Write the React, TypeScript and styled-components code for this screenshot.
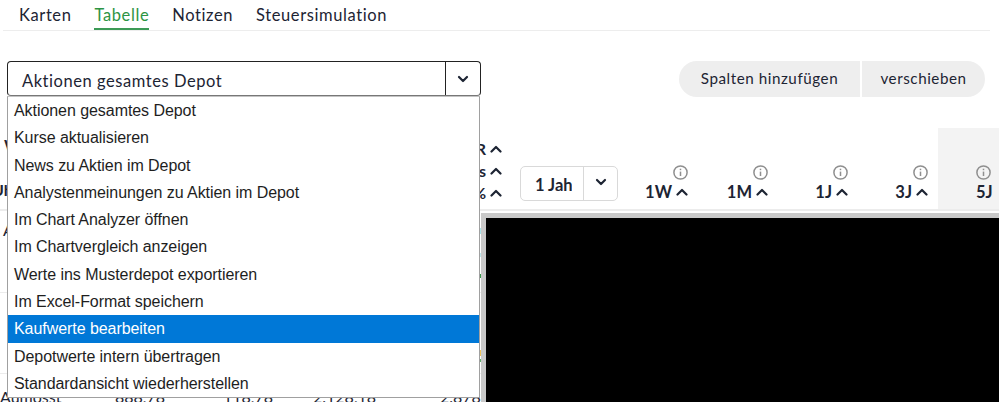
import React from 'react';
import styled, { createGlobalStyle } from 'styled-components';

const GlobalStyle = createGlobalStyle`
  html, body { margin: 0; padding: 0; background: #fff; }
  body { width: 999px; height: 402px; overflow: hidden; font-family: Lato, "Open Sans", sans-serif; color: #1d2433; }
`;

const Page = styled.div`
  position: relative;
  width: 999px;
  height: 402px;
  overflow: hidden;
`;

const Tabs = styled.nav`
  display: flex;
  gap: 23px;
  height: 30px;
  margin: 0 9px 0 3px;
  padding-left: 16px;
  border-bottom: 1px solid #ededed;
  box-sizing: content-box;
`;

const Tab = styled.a<{ $active?: boolean }>`
  height: 28px;
  line-height: 30px;
  font-size: 16.5px;
  letter-spacing: 0.6px;
  color: ${(p) => (p.$active ? '#2c9443' : '#1d2433')};
  border-bottom: ${(p) => (p.$active ? '2px solid #3c9a56' : 'none')};
`;

const Toolbar = styled.div`
  display: flex;
  justify-content: space-between;
  align-items: flex-start;
  height: 67px;
  margin-top: 30px;
  padding: 0 14px 0 7px;
`;

const SelectBox = styled.div`
  display: flex;
  width: 474px;
  height: 35px;
  box-sizing: border-box;
  border: 1px solid #222;
  border-bottom-color: #777;
  border-radius: 4px;
`;

const SelectValue = styled.div`
  flex: 1;
  padding-left: 14px;
  line-height: 38px;
  font-size: 16.5px;
  letter-spacing: 0.55px;
  border-right: 1px solid #222;
`;

const SelectArrow = styled.div`
  display: flex;
  align-items: center;
  justify-content: center;
  width: 34px;
`;

const ButtonGroup = styled.div`
  display: flex;
  gap: 2px;
`;

const PillButton = styled.button<{ $side: 'left' | 'right' }>`
  height: 36px;
  padding: 0 0 2px;
  width: ${(p) => (p.$side === 'left' ? '181px' : '123px')};
  border: 0;
  border-radius: ${(p) => (p.$side === 'left' ? '18px 0 0 18px' : '0 18px 18px 0')};
  background: #eeeeee;
  color: #1d2433;
  font-family: inherit;
  font-size: 15.2px;
  letter-spacing: 0.55px;
`;

const HeaderRow = styled.div`
  display: grid;
  grid-template-columns: 150px 370px 98px 70px repeat(4, 80px);
  height: 81px;
  border-bottom: 2px solid #ececec;
`;

const TitleCell = styled.div`
  display: flex;
  flex-direction: column;
  gap: 27px;
  padding-top: 8px;
  font-size: 16px;
  font-weight: 700;
  line-height: 18px;
`;

const TitleLine = styled.span<{ $offset: number }>`
  margin-left: ${(p) => p.$offset}px;
`;

const StackCell = styled.div`
  display: flex;
  flex-direction: column;
  align-items: flex-end;
  justify-content: flex-end;
  gap: 5px;
  padding: 0 18px 8px 0;
  font-size: 16px;
  font-weight: 700;
  line-height: 17px;
`;

const PeriodCell = styled.div`
  display: flex;
  align-self: end;
  height: 35px;
  margin-bottom: 8px;
  box-sizing: border-box;
  border: 1px solid #d9d9d9;
  border-radius: 5px;
`;

const PeriodValue = styled.div`
  width: 63px;
  padding: 0 11px 0 14px;
  box-sizing: border-box;
  border-right: 1px solid #d9d9d9;
`;

const PeriodText = styled.div`
  overflow: hidden;
  white-space: nowrap;
  font-size: 16.5px;
  font-weight: 700;
  line-height: 37px;
`;

const PeriodArrow = styled.div`
  flex: 1;
  display: flex;
  align-items: center;
  justify-content: center;
  padding-bottom: 4px;
`;

const ReturnCell = styled.div<{ $shaded?: boolean }>`
  display: flex;
  flex-direction: column;
  align-items: flex-end;
  justify-content: flex-end;
  gap: 3px;
  padding-bottom: 8px;
  background: ${(p) => (p.$shaded ? '#f3f3f3' : 'transparent')};
  font-size: 16.5px;
  font-weight: 700;
  line-height: 18px;
  white-space: nowrap;
`;

const ShadedCell = styled(ReturnCell)`
  grid-column: 8;
  margin-right: -80px;
  padding-right: 10px;
  margin-left: 10px;
  align-items: flex-start;
  padding-left: 38px;
`;

const SortLabel = styled.span`
  display: inline-flex;
  align-items: center;
  gap: 4px;
`;

const TableRow = styled.div<{ $first?: boolean; $last?: boolean }>`
  display: grid;
  grid-template-columns: 115px 108px 90px 127px 1fr;
  height: 81.5px;
  box-sizing: border-box;
  padding-top: ${(p) => (p.$last ? '14px' : '10px')};
  padding-left: ${(p) => (p.$first ? '3px' : '0')};
  border-bottom: 1px solid #ececec;
  font-size: 16px;
  line-height: 18px;
`;

const Menu = styled.ul`
  position: absolute;
  left: 7px;
  top: 96px;
  width: 473px;
  height: 302px;
  box-sizing: border-box;
  margin: 0;
  padding: 0;
  list-style: none;
  background: #fff;
  border: 1px solid #a0a0a0;
  border-top-color: #c4c4c4;
  font-family: "Liberation Sans", Arial, sans-serif;
  font-size: 16px;
  letter-spacing: -0.06px;
  color: #1e1e1e;
`;

const MenuItem = styled.li<{ $selected?: boolean }>`
  height: 27.3px;
  line-height: 27.6px;
  padding-left: 6px;
  background: ${(p) => (p.$selected ? '#0078d7' : 'transparent')};
  color: ${(p) => (p.$selected ? '#fff' : 'inherit')};
`;

const BlackPanel = styled.div`
  position: absolute;
  left: 481px;
  top: 213px;
  right: 0;
  bottom: 0;
  background: #000;
  border-top: 5px solid #c9c9c9;
  border-left: 5px solid #c9c9c9;
`;

const Ticks = styled.svg`
  position: absolute;
  left: 480px;
  top: 218px;
`;

const Chevron = ({ up = false, size = 12, sw = 2.2 }: { up?: boolean; size?: number; sw?: number }) => (
  <svg width={size} height={size} viewBox="0 0 12 12" fill="none" stroke="#1d2433" strokeWidth={sw} strokeLinecap="round" strokeLinejoin="round">
    <path d={up ? 'M1.5 8.5L6 4l4.5 4.5' : 'M2 4l4 4 4-4'} />
  </svg>
);

const InfoIcon = () => (
  <svg width="15" height="15" viewBox="0 0 15 15" fill="none" stroke="#8f8f8f" strokeWidth="1.5">
    <circle cx="7.5" cy="7.5" r="6.6" />
    <path d="M7.5 6.6v4.4" />
    <path d="M7.5 3.7v1.5" />
  </svg>
);

const menuItems = [
  'Aktionen gesamtes Depot',
  'Kurse aktualisieren',
  'News zu Aktien im Depot',
  'Analystenmeinungen zu Aktien im Depot',
  'Im Chart Analyzer öffnen',
  'Im Chartvergleich anzeigen',
  'Werte ins Musterdepot exportieren',
  'Im Excel-Format speichern',
  'Kaufwerte bearbeiten',
  'Depotwerte intern übertragen',
  'Standardansicht wiederherstellen',
];

const periods = ['1W', '1M', '1J', '3J'];

const App = () => {
  return (
    <Page>
      <GlobalStyle />
      <Tabs>
        <Tab>Karten</Tab>
        <Tab $active>Tabelle</Tab>
        <Tab>Notizen</Tab>
        <Tab>Steuersimulation</Tab>
      </Tabs>

      <Toolbar>
        <SelectBox>
          <SelectValue>Aktionen gesamtes Depot</SelectValue>
          <SelectArrow>
            <Chevron />
          </SelectArrow>
        </SelectBox>
        <ButtonGroup>
          <PillButton $side="left">Spalten hinzufügen</PillButton>
          <PillButton $side="right">verschieben</PillButton>
        </ButtonGroup>
      </Toolbar>

      <HeaderRow>
        <TitleCell>
          <TitleLine $offset={4}>Wert</TitleLine>
          <TitleLine $offset={-8}>Uhr</TitleLine>
        </TitleCell>
        <StackCell>
          <SortLabel>EUR <Chevron up size={12} /></SortLabel>
          <SortLabel>Titels <Chevron up size={12} /></SortLabel>
          <SortLabel>in % <Chevron up size={12} /></SortLabel>
        </StackCell>
        <PeriodCell>
          <PeriodValue>
            <PeriodText>1 Jahr</PeriodText>
          </PeriodValue>
          <PeriodArrow>
            <Chevron />
          </PeriodArrow>
        </PeriodCell>
        {periods.map((period) => (
          <ReturnCell key={period}>
            <InfoIcon />
            <SortLabel>
              {period} <Chevron up size={12} />
            </SortLabel>
          </ReturnCell>
        ))}
        <ShadedCell $shaded>
          <InfoIcon />
          <SortLabel>5J</SortLabel>
        </ShadedCell>
      </HeaderRow>

      <TableRow $first>
        <span>A</span>
      </TableRow>
      <TableRow />
      <TableRow $last>
        <span>Aumösst</span>
        <span>888,78</span>
        <span>118,78</span>
        <span>2.128,18</span>
        <span>2.878</span>
      </TableRow>

      <Menu>
        {menuItems.map((item) => (
          <MenuItem key={item} $selected={item === 'Kaufwerte bearbeiten'}>
            {item}
          </MenuItem>
        ))}
      </Menu>

      <BlackPanel />
      <Ticks width="2" height="184">
        <rect y="10" width="1" height="6" fill="#a8e4ea" />
        <rect y="35" width="1" height="4" fill="#bfe8ec" />
        <rect y="56" width="1" height="4" fill="#3a9a4c" />
        <rect y="132" width="1" height="6" fill="#eec35a" />
        <rect y="141" width="1" height="3" fill="#5fb06a" />
      </Ticks>
    </Page>
  );
};

export default App;
